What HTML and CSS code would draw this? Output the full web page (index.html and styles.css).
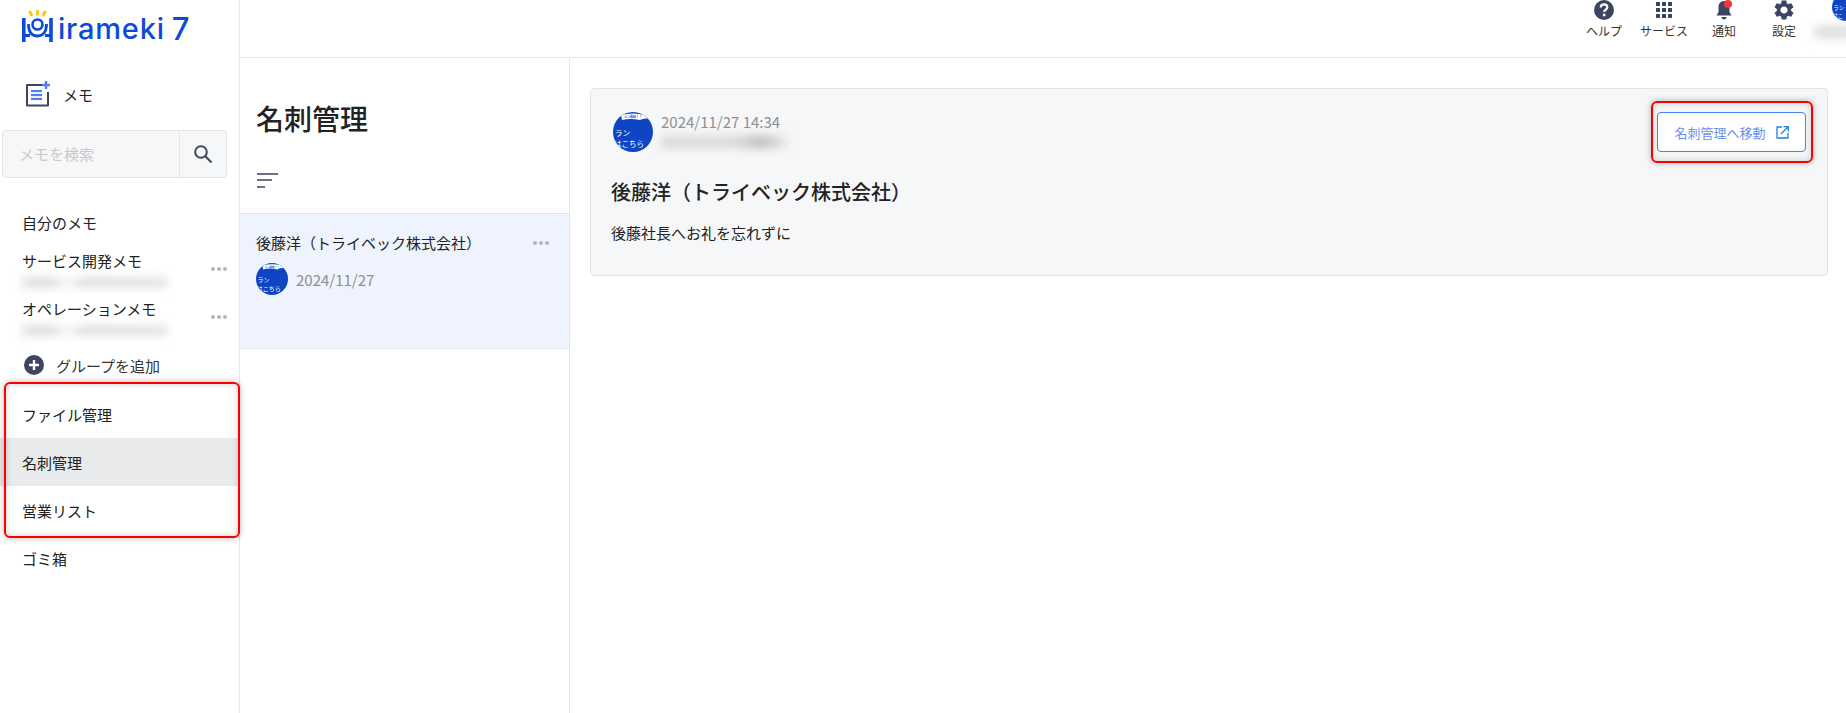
FILE: index.html
```html
<!DOCTYPE html>
<html lang="ja">
<head>
    <meta charset="UTF-8">
    <title>Hirameki 7 - 名刺管理</title>
    <link rel="stylesheet" href="styles.css">
</head>
<body>

    <div class="app">
        <!-- Sidebar -->
        <aside class="sidebar">
            <div class="logo">
                <svg class="logo-mark" width="38" height="38" viewBox="0 0 38 38" fill="none">
                    <g stroke="#ffc20e" stroke-width="2.800">
                        <path d="M9.500 5 L12 10"/>
                        <path d="M17.500 4 V9.500"/>
                        <path d="M25.500 5 L23 10"/>
                    </g>
                    <g stroke="#0a4bdc">
                        <path d="M3.800 12 V36 M31 12 V36" stroke-width="3.600"/>
                        <path d="M3.800 29.500 H10 M25 29.500 H31" stroke-width="3.200"/>
                        <circle cx="17.500" cy="18.500" r="5" stroke-width="2.600"/>
                        <path d="M8.500 18 C8.500 26 12 30 17.500 30 C23 30 26.500 26 26.500 18" stroke-width="2.800"/>
                    </g>
                </svg>
                <span class="logo-text">irameki</span>
                <span class="logo-num">7</span>
            </div>

            <div class="memo-link">
                <svg width="26" height="26" viewBox="0 0 26 26">
                    <path d="M18 4 H3 V24.500 H24 V11" fill="none" stroke="#3c4661" stroke-width="2" stroke-linejoin="round"/>
                    <path d="M7 8.500 H18 V19.500 H7 Z" fill="#e9eefc"/>
                    <path d="M7 10 H18 M7 14 H18 M7 18 H18" stroke="#4f7ff0" stroke-width="2"/>
                    <path d="M22 0 V8 M18 4 H26" stroke="#4f7ff0" stroke-width="2.400"/>
                </svg>
                <span>メモ</span>
            </div>

            <div class="search">
                <div class="search-input">メモを検索</div>
                <div class="search-btn">
                    <svg width="20" height="20" viewBox="0 0 20 20" fill="none" stroke="#3c4661" stroke-width="2">
                        <circle cx="8" cy="8" r="5.800"/>
                        <path d="M12.300 12.300 L18.500 18.500"/>
                    </svg>
                </div>
            </div>

            <div class="section-title">自分のメモ</div>

            <div class="group">
                <div class="group-name">サービス開発メモ</div>
                <div class="smudge group-sub"></div>
                <div class="dots"><i></i><i></i><i></i></div>
            </div>
            <div class="group">
                <div class="group-name">オペレーションメモ</div>
                <div class="smudge group-sub"></div>
                <div class="dots"><i></i><i></i><i></i></div>
            </div>

            <div class="add-group">
                <svg width="20" height="20" viewBox="0 0 20 20">
                    <circle cx="10" cy="10" r="10" fill="#3c4661"/>
                    <path d="M10 5 V15 M5 10 H15" stroke="#fff" stroke-width="2.400"/>
                </svg>
                <span>グループを追加</span>
            </div>

            <div class="nav-marked">
                <div class="nav-row">ファイル管理</div>
                <div class="nav-row active">名刺管理</div>
                <div class="nav-row">営業リスト</div>
            </div>
            <div class="nav-row">ゴミ箱</div>
        </aside>

        <div class="right">
            <!-- Top bar -->
            <header class="topbar">
                <div class="top-item">
                    <svg width="20" height="20" viewBox="0 0 20 20">
                        <circle cx="10" cy="10" r="10" fill="#3c4661"/>
                        <path d="M6.800 7.500 C6.800 5.500 8.300 4.400 10 4.400 C11.900 4.400 13.300 5.500 13.300 7.200 C13.300 9.500 10.200 9.600 10.200 12" fill="none" stroke="#fff" stroke-width="2.200"/>
                        <circle cx="10.200" cy="15" r="1.400" fill="#fff"/>
                    </svg>
                    <span>ヘルプ</span>
                </div>
                <div class="top-item">
                    <svg width="18" height="20" viewBox="0 0 18 18" fill="#3c4661">
                        <path d="M1 1h4v4H1zM7 1h4v4H7zM13 1h4v4h-4zM1 7h4v4H1zM7 7h4v4H7zM13 7h4v4h-4zM1 13h4v4H1zM7 13h4v4H7zM13 13h4v4h-4z"/>
                    </svg>
                    <span>サービス</span>
                </div>
                <div class="top-item">
                    <svg width="20" height="20" viewBox="0 0 20 20">
                        <path d="M10 1 C6 1 4.500 4 4.500 7.500 V12 L2.500 15.500 H17.500 L15.500 12 V7.500 C15.500 4 14 1 10 1 Z" fill="#3c4661"/>
                        <path d="M7.500 17 H12.500 C12.500 18.500 11.300 19.500 10 19.500 C8.700 19.500 7.500 18.500 7.500 17 Z" fill="#3c4661"/>
                        <circle cx="14" cy="4" r="4" fill="#f5333f"/>
                    </svg>
                    <span>通知</span>
                </div>
                <div class="top-item">
                    <svg width="22" height="20" viewBox="2 2 20 20" fill="#3c4661">
                        <path d="M19.140 12.940c.04-.3.06-.61.06-.94 0-.32-.02-.64-.07-.94l2.030-1.580a.49.49 0 0 0 .12-.61l-1.920-3.320a.488.488 0 0 0-.59-.22l-2.390.96c-.5-.38-1.030-.7-1.620-.94l-.36-2.540a.484.484 0 0 0-.48-.41h-3.840c-.24 0-.43.17-.47.41l-.36 2.540c-.59.24-1.130.57-1.620.94l-2.390-.96c-.22-.08-.47 0-.59.22L2.740 8.870c-.12.21-.08.47.12.61l2.030 1.580c-.05.3-.09.63-.09.94s.02.64.07.94l-2.030 1.580a.49.49 0 0 0-.12.61l1.920 3.320c.12.22.37.29.59.22l2.390-.96c.5.38 1.030.7 1.620.94l.36 2.540c.05.24.24.41.48.41h3.840c.24 0 .44-.17.47-.41l.36-2.540c.59-.24 1.130-.56 1.620-.94l2.390.96c.22.08.47 0 .59-.22l1.920-3.320c.12-.22.07-.47-.12-.61l-2.010-1.580zM12 15.600c-1.980 0-3.600-1.620-3.600-3.600s1.620-3.600 3.600-3.600 3.600 1.620 3.600 3.600-1.620 3.600-3.600 3.600z"/>
                    </svg>
                    <span>設定</span>
                </div>
                <div class="top-user">
                    <svg class="avatar top-avatar" viewBox="0 0 40 40">
                        <rect width="40" height="40" fill="#0e45c4"/>
                        <text x="2" y="24" class="avatar-text">ラン</text>
                        <text x="1" y="35" class="avatar-text">はこ</text>
                    </svg>
                    <div class="smudge top-name"></div>
                </div>
            </header>

            <div class="columns">
                <!-- List column -->
                <section class="list">
                    <h1>名刺管理</h1>
                    <div class="sort">
                        <svg width="22" height="16" viewBox="0 0 22 16" stroke="#3c4661" stroke-width="1.500">
                            <path d="M0 1 H21 M0 7 H15 M0 14 H8"/>
                        </svg>
                    </div>
                    <div class="list-item">
                        <div class="item-head">
                            <span>後藤洋（トライベック株式会社）</span>
                            <div class="dots"><i></i><i></i><i></i></div>
                        </div>
                        <div class="item-meta">
                            <svg class="avatar avatar-small" viewBox="0 0 40 40">
                                <rect width="40" height="40" fill="#0e45c4"/>
                                <path d="M8 3 Q20 0 32 3 L35 6.500 Q30 6 27 8 Q17 6 9 8 Z" fill="#fff"/>
                                <text x="20" y="6" class="avatar-top">メン開始！！</text>
                                <text x="2" y="24" class="avatar-text">ラン</text>
                                <text x="1" y="35" class="avatar-text">はこちら</text>
                            </svg>
                            <span>2024/11/27</span>
                        </div>
                    </div>
                </section>

                <!-- Detail -->
                <main class="detail">
                    <div class="card">
                        <div class="card-top">
                            <svg class="avatar avatar-big" viewBox="0 0 40 40">
                                <rect width="40" height="40" fill="#0e45c4"/>
                                <path d="M8 3 Q20 0 32 3 L35 6.500 Q30 6 27 8 Q17 6 9 8 Z" fill="#fff"/>
                                <text x="20" y="6" class="avatar-top">メン開始！！</text>
                                <text x="2" y="24" class="avatar-text">ラン</text>
                                <text x="1" y="35" class="avatar-text">はこちら</text>
                            </svg>
                            <div class="card-author">
                                <div class="card-date">2024/11/27 14:34</div>
                                <div class="smudge card-name"></div>
                            </div>
                            <div class="btn-marked">
                                <a class="btn-move">
                                    名刺管理へ移動
                                    <svg width="13" height="13" viewBox="0 0 13 13" fill="none" stroke="#1f7fe8" stroke-width="1.300">
                                        <path d="M6 1 H1 V12 H12 V7"/>
                                        <path d="M5 8 L12 1 M7.500 .7 H12.300 V5.500"/>
                                    </svg>
                                </a>
                            </div>
                        </div>
                        <h2>後藤洋（トライベック株式会社）</h2>
                        <p>後藤社長へお礼を忘れずに</p>
                    </div>
                </main>
            </div>
        </div>
    </div>

</body>
</html>
```

FILE: styles.css
```css
/* General Styles */
* {
    box-sizing: border-box;
}

body {
    margin: 0;
    height: 713px;
    overflow: hidden;
    background: #fff;
    color: #222;
    font-family: "Noto Sans CJK JP", "Noto Sans", sans-serif;
    font-size: 15px;
}

/* Avatar picture */
.avatar {
    display: block;
    flex: none;
    border-radius: 50%;
}

.avatar-top {
    font-size: 3px;
    font-weight: 700;
    fill: #0e45c4;
    text-anchor: middle;
}

.avatar-text {
    font-size: 7.500px;
    fill: #fff;
}

.app {
    display: flex;
    height: 713px;
}

/* Sidebar */
.sidebar {
    width: 240px;
    flex: none;
    border-right: 1px solid #e6e7ea;
}

.logo {
    display: flex;
    align-items: flex-end;
    height: 46px;
    padding-left: 20px;
    color: #0a4bdc;
    font-family: "Inter", sans-serif;
    font-weight: 500;
    line-height: 34px;
}

.logo-mark {
    align-self: flex-start;
    margin-top: 6px;
    flex: none;
}

.logo-text {
    font-size: 29px;
    letter-spacing: 0.800px;
}

.logo-num {
    font-size: 31px;
    margin-left: 7px;
}

.memo-link {
    display: flex;
    align-items: center;
    gap: 13px;
    height: 26px;
    margin-top: 35px;
    padding-left: 24px;
}

.search {
    display: flex;
    width: 225px;
    height: 48px;
    margin: 23px 0 0 2px;
    background: #f6f7f9;
    border: 1px solid #e3e5e8;
    border-radius: 4px;
}

.search-input {
    flex: 1;
    padding-left: 16px;
    color: #c9c9c9;
    line-height: 46px;
}

.search-btn {
    width: 47px;
    display: flex;
    align-items: center;
    justify-content: center;
    border-left: 1px solid #e3e5e8;
}

.section-title {
    margin: 32px 0 13px;
    padding-left: 22px;
    line-height: 26px;
}

.group {
    position: relative;
    height: 48px;
    padding-left: 22px;
}

.group-name {
    line-height: 24px;
}

.group-sub {
    width: 145px;
    height: 9px;
    margin-top: 5px;
    background: linear-gradient(90deg, #dadada 22%, #f2f2f2 28%, #f2f2f2 34%, #dadada 42%, #dedede 100%);
}

.smudge {
    filter: blur(5px);
}

.dots {
    display: flex;
    gap: 2px;
}

.dots i {
    width: 4px;
    height: 4px;
    border-radius: 50%;
    background: #b4b6bc;
}

.group .dots {
    position: absolute;
    right: 12px;
    top: 18px;
}

.add-group {
    display: flex;
    align-items: center;
    gap: 12px;
    height: 30px;
    margin-top: 5px;
    padding-left: 24px;
    color: #333;
}

.nav-marked {
    position: relative;
    margin-top: 10px;
}

/* red annotation frame over the rows */
.nav-marked::after {
    content: "";
    position: absolute;
    left: 4px;
    right: -1px;
    top: -8px;
    bottom: -4px;
    border: 2px solid #f00;
    border-radius: 6px;
    box-shadow: 0 0 6px rgba(0, 0, 0, 0.3), inset 0 0 6px rgba(0, 0, 0, 0.2);
}

.nav-row {
    height: 48px;
    padding-left: 22px;
    line-height: 50px;
}

.nav-row.active {
    background: #e9eaec;
}

/* Right side */
.right {
    flex: 1;
    min-width: 0;
}

.topbar {
    display: flex;
    justify-content: flex-end;
    height: 58px;
    border-bottom: 1px solid #e6e7ea;
    overflow: hidden;
}

.top-item {
    width: 60px;
    flex: none;
    display: flex;
    flex-direction: column;
    align-items: center;
    font-size: 12px;
    color: #333;
}

.top-item span {
    line-height: 18px;
    margin-top: 2px;
}

.top-user {
    width: 32px;
    flex: none;
}

.top-avatar {
    width: 28px;
    height: 28px;
    margin: -7px 0 0 18px;
}

.top-name {
    width: 40px;
    height: 12px;
    margin-top: 5px;
    background: #dcdcdc;
}

.columns {
    display: flex;
    height: 655px;
}

.list {
    width: 330px;
    flex: none;
    border-right: 1px solid #e6e7ea;
}

h1 {
    margin: 0;
    padding: 40px 0 0 16px;
    font-size: 28px;
    font-weight: 500;
    line-height: 40px;
}

.sort {
    height: 16px;
    margin: 35px 0 0 17px;
    display: flex;
}

.list-item {
    height: 136px;
    margin-top: 24px;
    padding: 16px 20px 0 16px;
    background: #eef3fd;
    border-top: 1px solid #e3e5e8;
    border-bottom: 1px solid #e3e5e8;
}

.item-head {
    display: flex;
    justify-content: space-between;
    align-items: center;
    line-height: 26px;
}

.item-meta {
    display: flex;
    align-items: center;
    gap: 8px;
    margin-top: 7px;
    color: #8f8f8f;
    font-size: 15px;
}

.avatar-small {
    width: 32px;
    height: 32px;
}

.detail {
    flex: 1;
    padding: 30px 18px 0 20px;
}

.card {
    height: 188px;
    padding: 23px 21px 0 22px;
    background: #f6f7f9;
    border: 1px solid #e3e5e8;
    border-radius: 4px;
}

.card-top {
    display: flex;
    align-items: flex-start;
}

.avatar-big {
    width: 40px;
    height: 40px;
    margin-right: 8px;
}

.card-author {
    flex: 1;
}

.card-date {
    color: #8f8f8f;
    font-size: 15px;
    line-height: 20px;
}

.card-name {
    width: 125px;
    height: 12px;
    margin-top: 4px;
    background: linear-gradient(90deg, #d8d8d8 60%, #b8b8b8 80%, #e4e4e4 100%);
}

.btn-marked {
    position: relative;
    flex: none;
}

/* red annotation frame over the button */
.btn-marked::after {
    content: "";
    position: absolute;
    left: -6px;
    right: -7px;
    top: -11px;
    bottom: -11px;
    border: 2px solid #f00;
    border-radius: 6px;
    box-shadow: 0 0 6px rgba(0, 0, 0, 0.3), inset 0 0 6px rgba(0, 0, 0, 0.2);
}

.btn-move {
    display: flex;
    align-items: center;
    gap: 10px;
    width: 149px;
    height: 40px;
    justify-content: center;
    background: #fff;
    border: 1px solid #4f7ff0;
    border-radius: 4px;
    color: #6c8ff0;
    font-size: 13px;
}

h2 {
    margin: 26px 0 0 -2px;
    font-size: 20px;
    font-weight: 500;
    line-height: 28px;
}

.card p {
    margin: 15px 0 0 -2px;
    line-height: 24px;
}
```
